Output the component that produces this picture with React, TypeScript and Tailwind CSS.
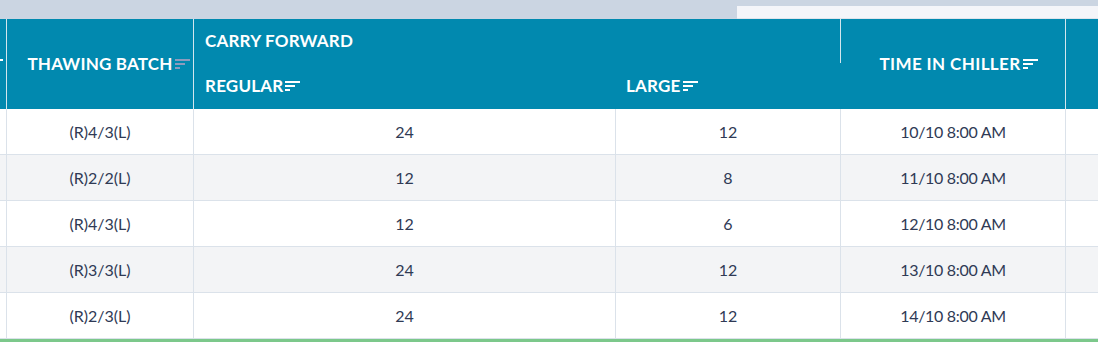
const rows = [
  { batch: '(R)4/3(L)', regular: 24, large: 12, time: '10/10 8:00 AM' },
  { batch: '(R)2/2(L)', regular: 12, large: 8, time: '11/10 8:00 AM' },
  { batch: '(R)4/3(L)', regular: 12, large: 6, time: '12/10 8:00 AM' },
  { batch: '(R)3/3(L)', regular: 24, large: 12, time: '13/10 8:00 AM' },
  { batch: '(R)2/3(L)', regular: 24, large: 12, time: '14/10 8:00 AM' },
];

const SortIcon = ({ muted = false }: { muted?: boolean }) => (
  <svg width="16" height="10" viewBox="0 0 16 10" className="shrink-0">
    <g fill={muted ? '#8d9bbd' : '#ffffff'}>
      <rect x="0" y="0" width="15" height="2" />
      <rect x="0" y="4" width="10" height="2" />
      <rect x="0" y="8" width="5" height="2" />
    </g>
  </svg>
);

const cols = 'grid grid-cols-[7px_187px_422px_225px_225px_1fr]';

export default function App() {
  return (
    <div className="w-[1098px] h-[342px] overflow-hidden bg-white font-['Lato',sans-serif]">
      {/* top strip */}
      <div className="h-[19px] bg-[#cbd5e2] flex justify-end items-end">
        <div className="w-[361px] h-[13px] bg-[#f4f5f9] border-b border-[#dfe4ec]" />
      </div>

      {/* header */}
      <div className={`${cols} grid-rows-[44px_46px] bg-[#0189af] text-white font-bold text-[17px] tracking-[0.2px]`}>
        <div className="row-span-2 border-r border-[#d3e6ee] overflow-hidden flex items-center">
          <div className="ml-[-12px]">
            <SortIcon />
          </div>
        </div>
        <div className="row-span-2 border-r border-[#d3e6ee] flex items-center justify-center pl-[18px] gap-[2px]">
          <span>THAWING BATCH</span>
          <SortIcon muted />
        </div>
        <div className="col-span-2 border-r border-[#d3e6ee] flex items-center pl-[11px]">CARRY FORWARD</div>
        <div className="row-span-2 border-r border-[#d3e6ee] flex items-center justify-center pl-[12px] gap-[2px] tracking-[0.4px]">
          <span>TIME IN CHILLER</span>
          <SortIcon />
        </div>
        <div className="row-span-2" />
        <div className="flex items-center pl-[11px] gap-[2px]">
          <span>REGULAR</span>
          <SortIcon />
        </div>
        <div className="flex items-center pl-[10px] gap-[2px]">
          <span>LARGE</span>
          <SortIcon />
        </div>
      </div>

      {/* body */}
      <div className="text-[16px] text-[#2f3a55]">
        {rows.map((r, i) => (
          <div
            key={i}
            className={`${cols} h-[46px] border-b border-[#dbe2ea] ${i % 2 === 1 ? 'bg-[#f3f4f6]' : 'bg-white'}`}
          >
            <div className="border-r border-[#dbe2ea]" />
            <div className="border-r border-[#dbe2ea] flex items-center justify-center">{r.batch}</div>
            <div className="border-r border-[#dbe2ea] flex items-center justify-center">{r.regular}</div>
            <div className="border-r border-[#dbe2ea] flex items-center justify-center">{r.large}</div>
            <div className="border-r border-[#dbe2ea] flex items-center justify-center tracking-[-0.3px]">{r.time}</div>
            <div />
          </div>
        ))}
        <div className="h-[3px] bg-[#7cc88b]" />
      </div>
    </div>
  );
}
